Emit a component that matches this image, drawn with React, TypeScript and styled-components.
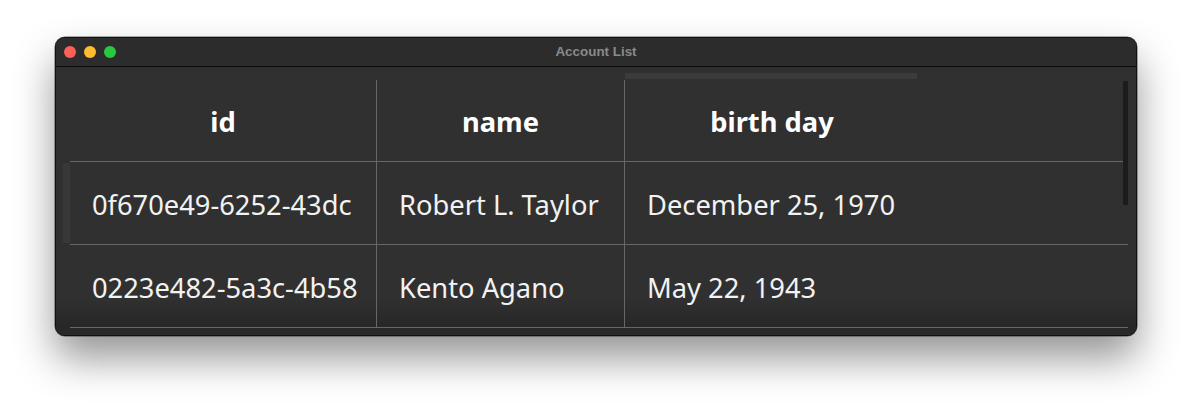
import React from "react";
import styled, { createGlobalStyle } from "styled-components";

const Global = createGlobalStyle`
  html, body { margin: 0; padding: 0; background: #ffffff; }
  body { font-family: "Noto Sans", "Open Sans", sans-serif; }
`;

const Page = styled.div`
  width: 1192px;
  height: 410px;
  padding: 37px 0 0 55px;
  box-sizing: border-box;
`;

const Window = styled.div`
  width: 1082px;
  height: 299px;
  border-radius: 10px;
  background: #303030;
  border: 1px solid #111;
  box-sizing: border-box;
  box-shadow: 0 22px 40px rgba(0, 0, 0, 0.42), 0 0 0 0.5px rgba(0,0,0,0.6);
  overflow: hidden;
  display: flex;
  flex-direction: column;
`;

const TitleBar = styled.div`
  position: relative;
  height: 28px;
  flex: none;
  background: #2c2c2c;
  border-bottom: 1px solid #0c0c0c;
  display: flex;
  align-items: center;
  justify-content: center;
`;

const Lights = styled.div`
  position: absolute;
  left: 8px;
  top: 8px;
  display: flex;
  gap: 8px;
`;

const Light = styled.span<{ $c: string }>`
  width: 12px;
  height: 12px;
  border-radius: 50%;
  background: ${(p) => p.$c};
`;

const Title = styled.div`
  font-family: "Liberation Sans", Arial, sans-serif;
  font-weight: bold;
  font-size: 13.4px;
  color: #8a8a8a;
  margin-left: 0;
  margin-top: -1px;
`;

const Content = styled.div`
  position: relative;
  flex: 1;
  padding: 13px 8px 0 14px;
  background: linear-gradient(#303030 0, #303030 232px, #272727 260px, #2a2a2a 100%);
`;

const Grid = styled.div`
  display: grid;
  grid-template-columns: 307px 248px 294px 1fr;
`;

const HeadCell = styled.div<{ $line: boolean }>`
  height: 82px;
  box-sizing: border-box;
  border-bottom: 1px solid #676767;
  border-right: ${(p) => (p.$line ? "1px solid #676767" : "none")};
  display: flex;
  align-items: center;
  justify-content: center;
  color: #ffffff;
  font-weight: 700;
  font-size: 27.3px;
  padding-top: 2px;
`;

const Cell = styled.div<{ $line: boolean }>`
  height: 83px;
  box-sizing: border-box;
  border-bottom: 1px solid #676767;
  border-right: ${(p) => (p.$line ? "1px solid #676767" : "none")};
  display: flex;
  align-items: center;
  padding-left: 22px;
  padding-top: 2px;
  color: #f2f2f2;
  font-size: 27.3px;
  white-space: nowrap;
`;

const HThumb = styled.div`
  position: absolute;
  left: 569px;
  top: 6px;
  width: 292px;
  height: 6px;
  background: #3b3b3b;
`;

const VThumb = styled.div`
  position: absolute;
  left: 1067px;
  top: 14px;
  width: 5px;
  height: 124px;
  background: #1c1c1c;
`;

const RowMark = styled.div`
  position: absolute;
  left: 7px;
  top: 96px;
  width: 7px;
  height: 80px;
  background: #383838;
`;

const rows = [
  ["0f670e49-6252-43dc", "Robert L. Taylor", "December 25, 1970"],
  ["0223e482-5a3c-4b58", "Kento Agano", "May 22, 1943"],
];

const headers = ["id", "name", "birth day", ""];

export default function App() {
  return (
    <>
      <Global />
      <Page>
        <Window>
          <TitleBar>
            <Lights>
              <Light $c="#fe5f57" />
              <Light $c="#febc2e" />
              <Light $c="#28c840" />
            </Lights>
            <Title>Account List</Title>
          </TitleBar>
          <Content>
            <Grid>
              {headers.map((h, i) => (
                <HeadCell key={i} $line={i < 2}>
                  {h}
                </HeadCell>
              ))}
              {rows.map((r, ri) => (
                <React.Fragment key={ri}>
                  {r.map((c, ci) => (
                    <Cell key={ci} $line={ci < 2}>
                      {c}
                    </Cell>
                  ))}
                  <Cell $line={false} />
                </React.Fragment>
              ))}
            </Grid>
            <HThumb />
            <VThumb />
            <RowMark />
          </Content>
        </Window>
      </Page>
    </>
  );
}
